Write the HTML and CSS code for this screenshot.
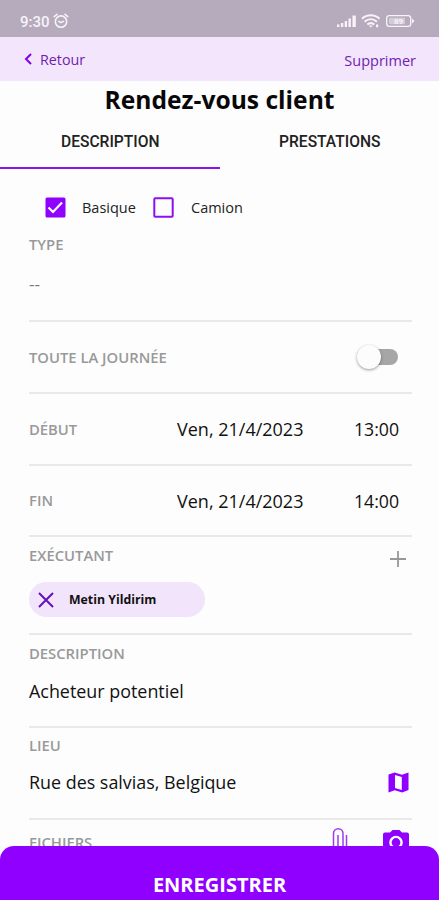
FILE: index.html
```html
<!DOCTYPE html>
<html lang="fr">
<head>
<meta charset="utf-8">
<title>Rendez-vous client</title>
<link rel="stylesheet" href="styles.css">
</head>
<body>
<div class="screen">
  <div class="status">
    <span class="clock">9:30</span>
    <svg class="alarm" width="16" height="16" viewBox="0 0 16 16" fill="none" stroke="#f7f3f9" stroke-width="1.6" stroke-linecap="round"><circle cx="8" cy="8.6" r="5.700"/><path d="M1.200 3.600 4 1.400M14.800 3.600 12 1.400M5.800 8.400 8 9.600l2.400-1.200"/></svg>
    <svg class="signals" width="80" height="16" viewBox="0 0 80 16" fill="#f7f3f9">
      <path d="M1 11.500h2.400V14H1zM4.900 10h2.400v4H4.900zM8.700 8h2.400v6H8.700zM12.500 5.500h2.400V14h-2.400zM16.500 2.500h3.300V14h-3.300z"/>
      <g fill="none" stroke="#f7f3f9" stroke-width="2"><path d="M26 5.700c5-4.600 12.500-4.600 17.500 0M28.600 8.700c3.700-3.200 8.600-3.200 12.300 0M31.300 11.500c2.200-1.700 4.800-1.700 7 0"/></g>
      <path d="M32.800 12.400h4L34.800 14.600zM40 11.500h2.200v2.700H40z"/>
      <rect x="50.700" y="2.700" width="24" height="10.600" rx="2.600" fill="none" stroke="#f7f3f9" stroke-width="1.300"/>
      <rect x="53" y="4.800" width="16" height="6.400" rx="1" opacity=".45"/>
      <path d="M76 5.500 78.500 8 76 10.500z"/>
      <text class="battery" x="58" y="11">89</text>
    </svg>
  </div>
  <nav class="nav">
    <a class="back"><svg width="9" height="12" viewBox="0 0 9 12" fill="none" stroke="#8300e8" stroke-width="2"><path d="M7 1 2 6l5 5"/></svg><span>Retour</span></a>
    <a class="remove">Supprimer</a>
  </nav>
  <h1 class="title"><span>Rendez-vous client</span></h1>
  <div class="tabs">
    <div class="tab active"><span>DESCRIPTION</span></div>
    <div class="tab"><span>PRESTATIONS</span></div>
  </div>
  <main class="form">
    <div class="checks">
      <svg width="21" height="21" viewBox="0 0 21 21"><rect x=".5" y=".5" width="20" height="20" rx="1.500" fill="#9000ff"/><path d="m3.500 10.500 4.500 4.500L17 5.500" fill="none" stroke="#fff" stroke-width="2.200"/></svg>
      <span class="check-label first">Basique</span>
      <svg width="21" height="21" viewBox="0 0 21 21"><rect x="1.300" y="1.300" width="18.400" height="18.400" rx="1" fill="none" stroke="#8c10ee" stroke-width="2"/></svg>
      <span class="check-label second">Camion</span>
    </div>
    <section class="type"><span class="label">TYPE</span><span class="dash">--</span></section>
    <section class="row"><span class="label">TOUTE LA JOURNÉE</span><span class="toggle"><span class="knob"></span></span></section>
    <section class="row"><span class="label">DÉBUT</span><span class="date">Ven, 21/4/2023</span><span class="time">13:00</span></section>
    <section class="row last"><span class="label">FIN</span><span class="date">Ven, 21/4/2023</span><span class="time">14:00</span></section>
    <section class="people">
      <div class="head"><span class="label">EXÉCUTANT</span><svg class="plus" width="18" height="18" viewBox="0 0 18 18" stroke="#989898" stroke-width="1.800"><path d="M9 1v16M1 9h16"/></svg></div>
      <div class="chip"><svg width="18" height="18" viewBox="0 0 18 18" stroke="#6512b4" stroke-width="2"><path d="m2 2 14 14M16 2 2 16"/></svg><span>Metin Yildirim</span></div>
    </section>
    <section class="note"><span class="label">DESCRIPTION</span><span class="value v-desc">Acheteur potentiel</span></section>
    <section class="note place"><span class="label">LIEU</span>
      <div class="address"><span class="value">Rue des salvias, Belgique</span>
      <svg width="21" height="21" viewBox="0 0 21 21" fill="#9000ff"><path fill-rule="evenodd" d="M.500 2.600 6.600.500 14 2.800 20.500.500V18l-6.300 2.500-7.500-2.300-6.200 2.300zM7 3v13l6.800 2V5z"/></svg></div>
    </section>
    <section class="files"><span class="label">FICHIERS</span>
      <svg class="clip" width="18" height="32" viewBox="0 0 18 32" fill="none" stroke="#9d3bed" stroke-width="1.500"><path d="M15.500 8v16a6 6 0 0 1-13 0V6.500a4.600 4.600 0 0 1 9.500 0V23a2.500 2.500 0 0 1-5 0V8"/></svg>
      <svg class="camera" width="28" height="26" viewBox="0 0 28 26"><path fill="#9000ff" d="M3 3.500h5L10.500 1h7L20 3.500h5a2 2 0 0 1 2 2V23a2 2 0 0 1-2 2H3a2 2 0 0 1-2-2V5.500a2 2 0 0 1 2-2z"/><circle cx="14" cy="13.500" r="5.600" fill="none" stroke="#fff" stroke-width="2.400"/></svg>
    </section>
  </main>
  <button class="save"><span>ENREGISTRER</span></button>
</div>
</body>
</html>
```
FILE: styles.css
```css
* { box-sizing: border-box; }
body { margin: 0; }
.screen { position: relative; width: 439px; height: 900px; overflow: hidden; background: #fdfdfd; color: #111; font-family: "Open Sans", "Noto Sans", sans-serif; white-space: nowrap; }
svg { display: block; flex: none; }
.status { height: 37px; background: #b6abbc; display: flex; align-items: center; padding: 6px 23px 0 20px; color: #f7f3f9; }
.clock { font: 500 15px Roboto, sans-serif; }
.alarm { margin-left: 3px; margin-top: -2px; }
.signals { margin-left: auto; margin-top: -2px; }
.battery { font: bold 8px Roboto, sans-serif; }
.nav { height: 44px; background: #f2e5fc; display: flex; justify-content: space-between; align-items: center; padding: 0 23px 0 24px; color: #711cb0; font-size: 14.500px; }
.back { display: flex; align-items: center; gap: 7px; font-size: 14.300px; }
.remove { padding-top: 3px; }
.title { margin: 0; height: 38px; line-height: 38px; text-align: center; font-size: 24.600px; font-weight: 700; color: #080808; }
.tabs { height: 50px; display: flex; font: 500 15.600px/46px Roboto, sans-serif; }
.tab { flex: 1; text-align: center; padding-left: 1px; color: #222; }
.tab.active { border-bottom: 2px solid #8b12ea; }
.form { padding: 0 27px 0 29px; }
.checks { height: 64px; padding: 13px 0 0 16px; display: flex; align-items: center; font-size: 14.500px; color: #222; }
.first { width: 54px; margin: 0 17px 0 16px; }
.second { margin-left: 17px; }
.label { display: block; margin-bottom: 2px; color: #999; font-size: 14.800px; font-weight: 600; line-height: 18px; }
.type, .row, .people, .note { border-bottom: 2px solid #e9e9e9; }
.type { height: 89px; padding-top: 2px; }
.dash { display: block; margin-top: 21px; line-height: 20px; color: #777; font-size: 17px; }
.row { height: 72px; display: flex; align-items: center; padding-top: 1px; font-size: 18px; }
.row.last { height: 71px; }
.row .label { width: 148px; }
.date { width: 177px; margin-top: -1px; }
.time { font-size: 17.700px; margin-top: -1px; }
.toggle { display: flex; align-items: center; width: 37px; height: 16px; border-radius: 8px; margin: -1px 14px 0 auto; background: #a6a6a6; }
.knob { width: 24px; height: 24px; margin-left: -4px; flex: none; border-radius: 50%; background: #fcfcfc; box-shadow: 0 1px 3px #0006; }
.people { height: 98px; padding-top: 9px; }
.head { display: flex; justify-content: space-between; height: 36px; }
.plus { margin: 4px 5px 0 0; }
.chip { width: 176px; height: 35px; border-radius: 18px; background: #f1e4fb; display: flex; align-items: center; padding-left: 8px; gap: 14px; font-size: 12.300px; font-weight: 700; }
.note { height: 93px; padding-top: 9px; }
.place { height: 92px; padding-top: 8px; }
.value { display: block; font-size: 17.900px; line-height: 26px; }
.v-desc { margin-top: 16px; }
.address { display: flex; justify-content: space-between; margin-top: 15px; padding-right: 3px; }
.address svg { margin-top: 3px; }
.files { display: flex; padding: 7px 2px 0 0; }
.files .label { padding-top: 6px; }
.clip { margin-left: auto; }
.camera { margin: 2px 0 0 33px; }
.save { position: absolute; left: 0; bottom: 0; width: 439px; height: 54px; border: 0; border-radius: 14px 14px 0 0; background: #9000ff; color: #fff; padding: 23px 0 0; font: 700 20px/30px "Open Sans", sans-serif; }
```
